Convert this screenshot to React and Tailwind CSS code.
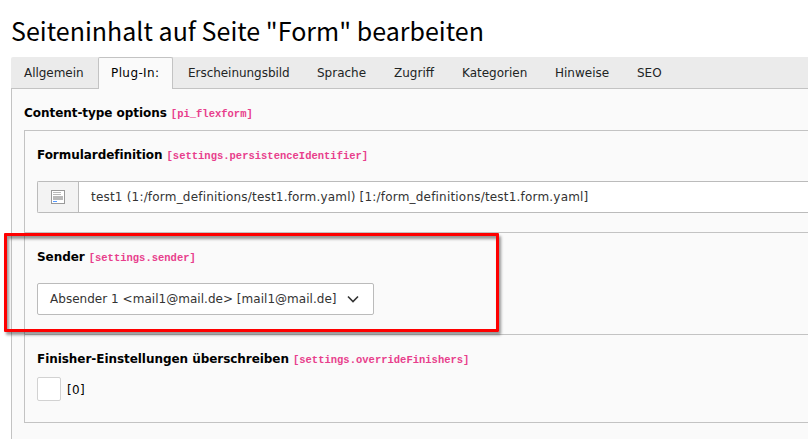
const tabs = [
  { name: 'Allgemein', size: 'w-[85px] tracking-[-0.04px]' },
  { name: 'Plug-In:', size: 'w-[75px] tracking-[0.4px]' },
  { name: 'Erscheinungsbild', size: 'w-[127px] tracking-[-0.04px]' },
  { name: 'Sprache', size: 'w-[75px]' },
  { name: 'Zugriff', size: 'w-[66px]' },
  { name: 'Kategorien', size: 'w-[91px]' },
  { name: 'Hinweise', size: 'w-[80px]' },
  { name: 'SEO', size: 'w-[52px]' },
];

function Label({ text, code }) {
  return (
    <div className="flex h-4 items-center whitespace-nowrap font-bold leading-4 text-black">
      <span className="tracking-[-0.05px]">{text}</span>
      <code className="ml-[4px] pt-px font-['Liberation_Mono',monospace] text-[10.5px] text-[#e83e8c]">[{code}]</code>
    </div>
  );
}

function FormIcon() {
  return (
    <svg width="14" height="14" viewBox="0 0 14 14" shapeRendering="crispEdges">
      <rect width="14" height="14" fill="#999" />
      <rect x="1" y="1" width="12" height="12" fill="#fff" />
      <path d="M2 2h8v1H2zM2 4h8v1H2zM2 6h10v4H2z" fill="#b9b9b9" />
      <path d="M2 11h4v1H2z" fill="#5599ff" />
    </svg>
  );
}

export default function App() {
  return (
    <div className="relative h-[439px] w-[808px] overflow-hidden bg-white font-['DejaVu_Sans',sans-serif] text-[12px] text-[#212424]">
      <h1 className="flex h-[57px] items-center whitespace-nowrap pl-[11px] pt-[3px] font-['Noto_Sans_CJK_SC',sans-serif] text-[25px] leading-8 tracking-[0.02px] text-black">
        Seiteninhalt auf Seite "Form" bearbeiten
      </h1>
      <nav className="ml-[11px] flex h-8 gap-[2px] rounded-tl-xs border-b border-[#c3c3c3] bg-[#ebebeb]">
        {tabs.map(({ name, size }, i) => (
          <div
            key={name}
            className={
              (i === 1
                ? 'h-8 shrink-0 whitespace-nowrap rounded-t-xs border border-b-0 border-[#c3c3c3] bg-[#fafafa] pl-3 pt-[7px] leading-4 text-black '
                : 'h-[31px] shrink-0 whitespace-nowrap pl-[13px] pt-2 leading-4 ') + size
            }
          >
            {name}
          </div>
        ))}
      </nav>
      <main className="ml-[11px] h-[350px] border-l border-[#c3c3c3] bg-[#fafafa] pl-3 pt-4">
        <Label text="Content-type options" code="pi_flexform" />
        <div className="mt-[9px] h-[293px] border-y border-l border-[#c3c3c3]">
          <section className="h-[102px] border-b border-[#c3c3c3] pl-3 pt-4">
            <Label text="Formulardefinition" code="settings.persistenceIdentifier" />
            <div className="mt-[18px] flex h-8 rounded-l-xs border border-r-0 border-[#bbb] bg-white">
              <div className="flex w-[41px] items-center justify-center border-r border-[#bbb] bg-[#f3f3f3]">
                <FormIcon />
              </div>
              <div className="whitespace-nowrap pl-3 leading-[30px] tracking-[0.197px] text-[#333]">
                test1 (1:/form_definitions/test1.form.yaml) [1:/form_definitions/test1.form.yaml]
              </div>
            </div>
          </section>
          <section className="h-[102px] border-b border-[#c3c3c3] pl-3 pt-4">
            <Label text="Sender" code="settings.sender" />
            <div className="mt-[18px] flex h-8 w-[337px] items-center justify-between rounded-xs border border-[#bbb] bg-white pl-3 pr-[14px] text-[#333]">
              <span className="whitespace-nowrap tracking-[0.03px]">Absender 1 &lt;mail1@mail.de&gt; [mail1@mail.de]</span>
              <svg width="12" height="8" viewBox="0 0 12 8" fill="none" stroke="#333" strokeWidth="1.6">
                <path d="M1 1.5l5 5 5-5" />
              </svg>
            </div>
          </section>
          <section className="pl-3 pt-4">
            <Label text="Finisher-Einstellungen überschreiben" code="settings.overrideFinishers" />
            <div className="mt-[10px] flex h-6 items-center gap-[6px] text-black">
              <div className="size-6 rounded-xs border border-[#d2d2d2] bg-white" />
              <span className="pt-[2px] tracking-[0.3px]">[0]</span>
            </div>
          </section>
        </div>
      </main>
      <div className="pointer-events-none absolute left-[4px] top-[233px] h-[99px] w-[495px] rounded-[1px] border-[3px] border-[#fe0000] shadow-[2px_3px_3px_rgba(0,0,0,0.4),inset_2px_3px_3px_rgba(0,0,0,0.4)]" />
    </div>
  );
}
